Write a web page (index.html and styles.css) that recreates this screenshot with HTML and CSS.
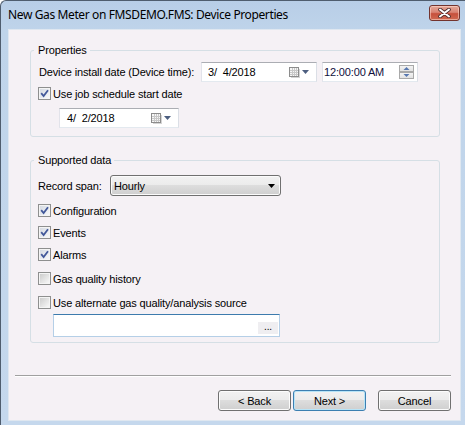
FILE: index.html
```html
<!DOCTYPE html>
<html>
<head>
<meta charset="utf-8">
<title>Device Properties</title>
<link rel="stylesheet" href="styles.css">
</head>
<body>
<div class="window">
  <div class="titlebar">
    <span class="title">New Gas Meter on FMSDEMO.FMS: Device Properties</span>
    <div class="close">
      <svg width="13" height="10" viewBox="0 0 13 10">
        <path d="M2 1.5 L11 8.5 M11 1.5 L2 8.5" stroke="#4a2b2b" stroke-width="3.6" stroke-linecap="round"/>
        <path d="M2 1.5 L11 8.5 M11 1.5 L2 8.5" stroke="#ffffff" stroke-width="2" stroke-linecap="round"/>
      </svg>
    </div>
  </div>
  <div class="client">
    <div class="content">
      <fieldset class="group group-props">
        <legend>Properties</legend>
        <div class="row row-install">
          <span class="lbl-install">Device install date (Device time):</span>
          <div class="dtp dtp-install">
            <span class="dtp-text">3/  4/2018</span>
            <svg class="cal" width="11" height="11" viewBox="0 0 11 11">
              <rect x="0.5" y="0.5" width="9" height="9" fill="#f6f6f6" stroke="#8c8c8c"/>
              <path d="M1 3.5h8M1 5.5h8M1 7.5h8M3.5 1v8M5.5 1v8M7.5 1v8" stroke="#c8c8c8"/>
              <path d="M10.5 2v9M2 10.5h9" stroke="#d4d4d4"/>
            </svg>
            <svg class="dd" width="7" height="4" viewBox="0 0 7 4"><path d="M0 0h7L3.5 4z" fill="#4d5f80"/></svg>
          </div>
          <div class="dtp tp">
            <span class="dtp-text tp-text">12:00:00 AM</span>
            <svg class="spin" width="15" height="14" viewBox="0 0 15 14">
              <defs>
                <linearGradient id="sg" x1="0" y1="0" x2="0" y2="1">
                  <stop offset="0" stop-color="#f5f5f5"/>
                  <stop offset="1" stop-color="#e0e0e0"/>
                </linearGradient>
              </defs>
              <rect x="0.5" y="0.5" width="14" height="6" fill="url(#sg)" stroke="#a9a9a9"/>
              <rect x="0.5" y="7.5" width="14" height="6" fill="url(#sg)" stroke="#a9a9a9"/>
              <path d="M4.5 5h6L7.5 2z" fill="#5878b0"/>
              <path d="M4.5 9h6L7.5 12z" fill="#5878b0"/>
            </svg>
          </div>
        </div>
        <label class="check-row row-usejob">
          <span class="cb checked"><svg width="9" height="9" viewBox="0 0 9 9"><path d="M1.2 4.2 L3.6 7 L8 1.3" stroke="#42589a" stroke-width="1.8" fill="none"/></svg></span>
          <span>Use job schedule start date</span>
        </label>
        <div class="dtp dtp-start">
          <span class="dtp-text">4/  2/2018</span>
          <svg class="cal" width="11" height="11" viewBox="0 0 11 11">
            <rect x="0.5" y="0.5" width="9" height="9" fill="#f6f6f6" stroke="#8c8c8c"/>
            <path d="M1 3.5h8M1 5.5h8M1 7.5h8M3.5 1v8M5.5 1v8M7.5 1v8" stroke="#c8c8c8"/>
            <path d="M10.5 2v9M2 10.5h9" stroke="#d4d4d4"/>
          </svg>
          <svg class="dd" width="7" height="4" viewBox="0 0 7 4"><path d="M0 0h7L3.5 4z" fill="#4d5f80"/></svg>
        </div>
      </fieldset>

      <fieldset class="group group-data">
        <legend>Supported data</legend>
        <div class="row row-span">
          <span class="lbl-span">Record span:</span>
          <div class="select">
            <span class="select-text">Hourly</span>
            <svg width="7" height="4" viewBox="0 0 7 4"><path d="M0 0h7L3.5 4z" fill="#000"/></svg>
          </div>
        </div>
        <label class="check-row cr-config">
          <span class="cb checked"><svg width="9" height="9" viewBox="0 0 9 9"><path d="M1.2 4.2 L3.6 7 L8 1.3" stroke="#42589a" stroke-width="1.8" fill="none"/></svg></span>
          <span>Configuration</span>
        </label>
        <label class="check-row cr-near">
          <span class="cb checked"><svg width="9" height="9" viewBox="0 0 9 9"><path d="M1.2 4.2 L3.6 7 L8 1.3" stroke="#42589a" stroke-width="1.8" fill="none"/></svg></span>
          <span>Events</span>
        </label>
        <label class="check-row cr-near">
          <span class="cb checked"><svg width="9" height="9" viewBox="0 0 9 9"><path d="M1.2 4.2 L3.6 7 L8 1.3" stroke="#42589a" stroke-width="1.8" fill="none"/></svg></span>
          <span>Alarms</span>
        </label>
        <label class="check-row cr-far">
          <span class="cb"></span>
          <span>Gas quality history</span>
        </label>
        <label class="check-row cr-far">
          <span class="cb"></span>
          <span>Use alternate gas quality/analysis source</span>
        </label>
        <div class="path-field">
          <span class="ellipsis">...</span>
        </div>
      </fieldset>
    </div>

    <div class="separator"></div>

    <div class="buttons">
      <button class="btn">&lt; Back</button>
      <button class="btn btn-default">Next &gt;</button>
      <button class="btn btn-cancel">Cancel</button>
    </div>
  </div>
</div>
</body>
</html>
```
FILE: styles.css
```css
* { box-sizing: border-box; }
html, body { margin: 0; padding: 0; }
body {
  width: 465px;
  height: 425px;
  overflow: hidden;
  background: #ffffff;
  font-family: "Liberation Sans", Arial, sans-serif;
  font-size: 11px;
  letter-spacing: -0.15px;
  color: #000;
}
.window {
  width: 465px;
  height: 425px;
  display: flex;
  flex-direction: column;
  border: 1px solid #4f5d6e;
  border-right: 0;
  border-bottom: 0;
  border-top-left-radius: 6px;
  background: linear-gradient(#b8cee7 0, #bfd4ea 30px, #c5d8ed 100%);
  padding: 0 4px 4px 7px;
}
.titlebar {
  height: 28px;
  flex: none;
  display: flex;
  justify-content: space-between;
  align-items: flex-start;
}
.title {
  font-family: "Noto Sans", "Open Sans", sans-serif;
  font-size: 12px;
  letter-spacing: -0.38px;
  line-height: 16px;
  margin-top: 6px;
  color: #000;
}
.close {
  width: 31px;
  height: 16px;
  margin-top: 4px;
  margin-right: 1px;
  border: 1px solid #73342e;
  border-radius: 3px;
  background: linear-gradient(#e6a999 0, #d98373 45%, #c6503c 55%, #d06a52 100%);
  box-shadow: inset 0 0 0 1px rgba(255, 220, 210, 0.55);
  display: flex;
  align-items: center;
  justify-content: center;
}
.close svg { display: block; }
.client {
  flex: 1;
  background: #f5f1f5;
  border: 1px solid #dfe7f0;
  display: flex;
  flex-direction: column;
}
.content {
  padding: 14px 20px 0 21px;
}
.group {
  margin: 0;
  padding: 5px 7px 8px 7px;
  border: 1px solid #d5dfe5;
  border-radius: 3px;
  min-width: 0;
}
.group legend {
  padding: 0 3px 0 4px;
  margin-left: -4px;
  line-height: 13px;
}
.group-data {
  margin-top: 17px;
  padding-bottom: 5px;
}
.row {
  display: flex;
  align-items: center;
}
.row-install { height: 20px; }
.lbl-install {
  width: 163px;
  padding-left: 1px;
}
.dtp {
  height: 20px;
  background: #fff;
  border: 1px solid;
  border-color: #abadb3 #dbdfe6 #e3e9ef #e2e3ea;
  display: flex;
  align-items: center;
}
.dtp-text {
  flex: 1;
  white-space: pre;
}
.dtp .cal { display: block; margin-right: 2px; }
.dtp .dd { display: block; }
.dtp-install {
  width: 116px;
  padding: 0 7px 0 6px;
}
.tp {
  width: 96px;
  margin-left: 5px;
  padding: 0 3px 0 1px;
}
.tp-text { color: #10103c; }
.spin { display: block; }
.check-row {
  display: flex;
  align-items: center;
  height: 13px;
  gap: 2px;
}
.row-usejob { margin-top: 5px; }
.cb {
  width: 13px;
  height: 13px;
  flex: none;
  border: 1px solid #8e8f8f;
  padding: 1px;
  background: linear-gradient(135deg, #cdcdcd, #f7f7f7) content-box, #f4f4f4;
}
.cb.checked {
  background: linear-gradient(135deg, #d6dbe3, #f6f7f9) content-box, #f4f4f4;
}
.cb svg { display: block; }
.dtp-start {
  width: 120px;
  margin-top: 8px;
  margin-left: 21px;
  padding: 0 7px 0 7px;
}
.row-span {
  height: 21px;
  margin-top: 3px;
}
.lbl-span { width: 72px; }
.select {
  width: 171px;
  height: 21px;
  border: 1px solid #707070;
  border-radius: 3px;
  background: linear-gradient(#f2f2f2 0, #ebebeb 50%, #dddddd 50%, #cfcfcf 100%);
  box-shadow: inset 0 0 0 1px #fbfbfb;
  display: flex;
  align-items: center;
  padding: 0 5px 0 3px;
}
.select-text { flex: 1; }
.select svg { display: block; }
.cr-config { margin-top: 8px; }
.cr-near { margin-top: 9px; }
.cr-far { margin-top: 11px; }
.path-field {
  width: 227px;
  height: 23px;
  margin: 5px 0 0 15px;
  background: #fff;
  border: 1px solid;
  border-color: #3d7bad #b5cfe7 #b5cfe7 #b5cfe7;
  display: flex;
  align-items: flex-end;
  justify-content: flex-end;
  padding: 0 1px 2px 0;
}
.ellipsis {
  width: 20px;
  height: 12px;
  background: #efeef1;
  font-size: 10px;
  line-height: 9px;
  text-align: center;
}
.separator {
  margin: 32px 9px 0 6px;
  height: 2px;
  border-top: 1px solid #a0a0a0;
  border-bottom: 1px solid #ffffff;
}
.buttons {
  display: flex;
  justify-content: flex-end;
  margin-top: 13px;
  padding-right: 9px;
}
.btn {
  width: 73px;
  height: 21px;
  margin: 0 0 0 2px;
  padding: 0;
  border: 1px solid #707070;
  border-radius: 3px;
  background: linear-gradient(#f2f2f2 0, #ebebeb 50%, #dddddd 50%, #cfcfcf 100%);
  box-shadow: inset 0 0 0 1px #fcfcfc;
  font-family: "Liberation Sans", Arial, sans-serif;
  font-size: 11px;
  letter-spacing: -0.15px;
  color: #000;
}
.btn-default {
  border-color: #3c7fb1;
  box-shadow: inset 0 0 0 1px #b8e4f7;
}
.btn-cancel { margin-left: 12px; }
```
